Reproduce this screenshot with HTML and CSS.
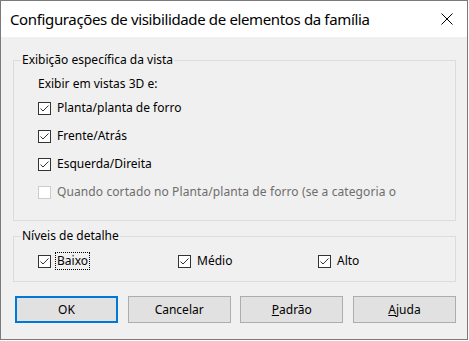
FILE: index.html
```html
<!DOCTYPE html>
<html lang="pt">
<head>
    <meta charset="UTF-8">
    <title>Configurações de visibilidade de elementos da família</title>
    <link rel="stylesheet" href="styles.css">
</head>
<body>
    <div class="window">
        <div class="titlebar">
            <span class="title">Configurações de visibilidade de elementos da família</span>
            <svg class="close" width="12" height="12" viewBox="0 0 12 12">
                <path d="M0.5 0.5 L11.5 11.5 M11.5 0.5 L0.5 11.5" stroke="#000" stroke-width="1" fill="none"/>
            </svg>
        </div>

        <div class="content">
            <fieldset class="group group-view">
                <legend>Exibição específica da vista</legend>
                <div class="sub-label">Exibir em vistas 3D e:</div>
                <label class="check-row">
                    <span class="box checked"></span>
                    <span class="text">Planta/planta de forro</span>
                </label>
                <label class="check-row">
                    <span class="box checked"></span>
                    <span class="text">Frente/Atrás</span>
                </label>
                <label class="check-row">
                    <span class="box checked"></span>
                    <span class="text">Esquerda/Direita</span>
                </label>
                <label class="check-row disabled">
                    <span class="box"></span>
                    <span class="text">Quando cortado no Planta/planta de forro (se a categoria o</span>
                </label>
            </fieldset>

            <fieldset class="group group-detail">
                <legend>Níveis de detalhe</legend>
                <div class="detail-row">
                    <label class="check-row">
                        <span class="box checked"></span>
                        <span class="text focus">Baixo</span>
                    </label>
                    <label class="check-row">
                        <span class="box checked"></span>
                        <span class="text">Médio</span>
                    </label>
                    <label class="check-row">
                        <span class="box checked"></span>
                        <span class="text">Alto</span>
                    </label>
                </div>
            </fieldset>

            <div class="buttons">
                <button class="btn default">OK</button>
                <button class="btn">Cancelar</button>
                <button class="btn"><u>P</u>adrão</button>
                <button class="btn"><u>A</u>juda</button>
            </div>
        </div>
    </div>
</body>
</html>
```

FILE: styles.css
```css
body {
    margin: 0;
    background: #ffffff;
    font-family: "Noto Sans", "Open Sans", sans-serif;
    font-size: 12px;
    color: #000;
}
.window {
    width: 466px;
    height: 338px;
    border: 1px solid #7a7a7a;
    background: #f0f0f0;
    display: flex;
    flex-direction: column;
}
.titlebar {
    height: 36px;
    background: #fff;
    display: flex;
    align-items: center;
    justify-content: space-between;
    padding: 0 14px 0 9px;
}
.title {
    font-size: 15px;
    letter-spacing: -0.36px;
}
.content {
    padding: 15px 11px 0 12px;
}
.group {
    margin: 0;
    padding: 0 0 0 24px;
    border: 1px solid #dcdcdc;
    min-width: 0;
}
.group legend {
    margin-left: -17px;
    padding: 0 1px;
    line-height: 16px;
}
.group-view {
    padding-bottom: 14px;
}
.group-detail {
    margin-top: 7px;
    padding-top: 3px;
    padding-bottom: 6px;
}
.sub-label {
    line-height: 16px;
    margin-top: 8px;
    margin-bottom: 2px;
}
.check-row {
    display: flex;
    align-items: center;
    height: 28px;
}
.box {
    width: 11px;
    height: 11px;
    border: 1px solid #333;
    background: #fff;
    flex-shrink: 0;
    margin-right: 6px;
}
.box.checked {
    background: #fff url("data:image/svg+xml,%3Csvg xmlns='http://www.w3.org/2000/svg' width='11' height='11'%3E%3Cpath d='M1.5 5.5 L4 8 L9.5 2.5' stroke='%23333' fill='none'/%3E%3C/svg%3E") no-repeat;
}
.check-row .text {
    line-height: 16px;
}
.disabled .box {
    border-color: #cccccc;
}
.disabled .text {
    color: #6d6d6d;
    letter-spacing: 0.1px;
}
.detail-row {
    display: grid;
    grid-template-columns: 140px 140px 140px;
}
.text.focus {
    outline: 1px dotted #000;
    outline-offset: 0;
    padding: 0 1px;
    margin-left: -1px;
}
.buttons {
    display: flex;
    justify-content: space-between;
    margin-top: 14px;
    padding: 0 0 0 2px;
}
.btn {
    width: 103px;
    height: 27px;
    background: #e1e1e1;
    border: 1px solid #adadad;
    font-family: inherit;
    font-size: 12px;
    color: #000;
    padding: 0;
}
.btn.default {
    border: 2px solid #0078d7;
}
```
